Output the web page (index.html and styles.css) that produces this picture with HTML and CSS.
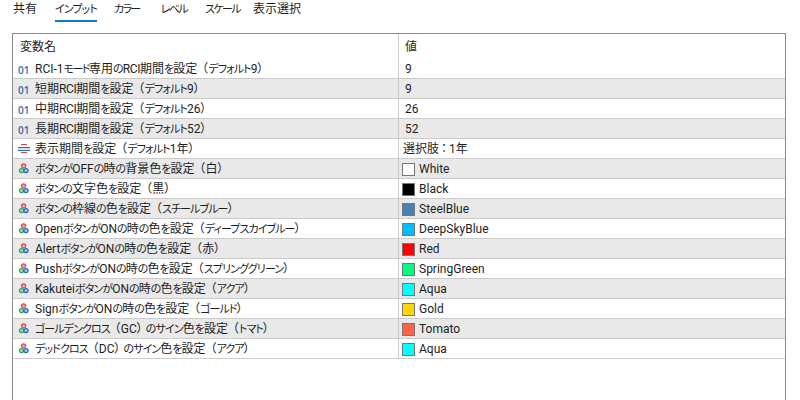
FILE: index.html
```html
<!DOCTYPE html>
<html lang="ja">
<head>
<meta charset="utf-8">
<title>Inputs</title>
<link rel="stylesheet" href="styles.css">
</head>
<body>
<svg class="defs" width="0" height="0">
  <symbol id="i-enum" viewBox="0 0 14 13">
    <path d="M1 5h12v2H1z" fill="#cfe2f5"/>
    <path d="M4 1.5h6" stroke="#d04848" fill="none"/>
    <path d="M1 4.5h12" stroke="#2a72b8" fill="none"/>
    <path d="M1 7.5h12" stroke="#2a72b8" fill="none"/>
    <path d="M4 9.5h6" stroke="#d04848" fill="none"/>
  </symbol>
  <symbol id="i-color" viewBox="0 0 14 13">
    <circle cx="6.6" cy="2.9" r="2.1" fill="#f0a8a8" stroke="#d84848" stroke-width="1.2"/>
    <circle cx="4.5" cy="7.6" r="2.1" fill="#a8d8b8" stroke="#2f9a58" stroke-width="1.2"/>
    <circle cx="9" cy="7.6" r="2.1" fill="#a0c4ec" stroke="#2468b8" stroke-width="1.2"/>
  </symbol>
</svg>
<nav class="tabs">
  <span class="tab t1">共有</span>
  <span class="tab t2 active"><span class="k">インプット</span></span>
  <span class="tab t3"><span class="k tight">カラー</span></span>
  <span class="tab t4"><span class="k tight">レベル</span></span>
  <span class="tab t5"><span class="k tight">スケール</span></span>
  <span class="tab t6">表示選択</span>
</nav>
<main class="grid">
  <div class="row head"><div class="c1 h1">変数名</div><div class="c2 h2">値</div></div>
  <div class="row"><div class="c1"><span class="num">01</span><div>RCI-1<span class="k m">モード</span>専用<span class="k">の</span><span class="l">RCI</span>期間<span class="k">を</span>設定<span class="p">（</span><span class="k">デフォルト</span>9<span class="q">）</span></div></div><div class="c2">9</div></div>
  <div class="row alt"><div class="c1"><span class="num">01</span><div>短期<span class="l">RCI</span>期間<span class="k">を</span>設定<span class="p">（</span><span class="k">デフォルト</span>9<span class="q">）</span></div></div><div class="c2">9</div></div>
  <div class="row"><div class="c1"><span class="num">01</span><div>中期<span class="l">RCI</span>期間<span class="k">を</span>設定<span class="p">（</span><span class="k">デフォルト</span>26<span class="q">）</span></div></div><div class="c2">26</div></div>
  <div class="row alt"><div class="c1"><span class="num">01</span><div>長期<span class="l">RCI</span>期間<span class="k">を</span>設定<span class="p">（</span><span class="k">デフォルト</span>52<span class="q">）</span></div></div><div class="c2">52</div></div>
  <div class="row"><div class="c1"><svg class="ic"><use href="#i-enum"/></svg><div>表示期間<span class="k">を</span>設定<span class="p">（</span><span class="k">デフォルト</span>1年<span class="q">）</span></div></div><div class="c2"><div class="sel">選択肢<span class="colon">：</span>1年</div></div></div>
  <div class="row alt"><div class="c1"><svg class="ic"><use href="#i-color"/></svg><div><span class="k">ボタンが</span>OFF<span class="k">の</span>時<span class="k">の</span>背景色<span class="k">を</span>設定<span class="p">（</span>白<span class="q">）</span></div></div><div class="c2"><i class="sw white"></i>White</div></div>
  <div class="row"><div class="c1"><svg class="ic"><use href="#i-color"/></svg><div><span class="k">ボタンの</span>文字色<span class="k">を</span>設定<span class="p">（</span>黒<span class="q">）</span></div></div><div class="c2"><i class="sw black"></i>Black</div></div>
  <div class="row alt"><div class="c1"><svg class="ic"><use href="#i-color"/></svg><div><span class="k">ボタンの</span>枠線<span class="k">の</span>色<span class="k">を</span>設定<span class="p">（</span><span class="k">スチールブルー</span><span class="q">）</span></div></div><div class="c2"><i class="sw steel"></i>SteelBlue</div></div>
  <div class="row"><div class="c1"><svg class="ic"><use href="#i-color"/></svg><div>Open<span class="k">ボタンが</span>ON<span class="k">の</span>時<span class="k">の</span>色<span class="k">を</span>設定<span class="p">（</span><span class="k">ディープスカイブルー</span><span class="q">）</span></div></div><div class="c2"><i class="sw sky"></i>DeepSkyBlue</div></div>
  <div class="row alt"><div class="c1"><svg class="ic"><use href="#i-color"/></svg><div>Alert<span class="k">ボタンが</span>ON<span class="k">の</span>時<span class="k">の</span>色<span class="k">を</span>設定<span class="p">（</span>赤<span class="q">）</span></div></div><div class="c2"><i class="sw red"></i>Red</div></div>
  <div class="row"><div class="c1"><svg class="ic"><use href="#i-color"/></svg><div>Push<span class="k">ボタンが</span>ON<span class="k">の</span>時<span class="k">の</span>色<span class="k">を</span>設定<span class="p">（</span><span class="k">スプリンググリーン</span><span class="q">）</span></div></div><div class="c2"><i class="sw spring"></i>SpringGreen</div></div>
  <div class="row alt"><div class="c1"><svg class="ic"><use href="#i-color"/></svg><div>Kakutei<span class="k">ボタンが</span>ON<span class="k">の</span>時<span class="k">の</span>色<span class="k">を</span>設定<span class="p">（</span><span class="k">アクア</span><span class="q">）</span></div></div><div class="c2"><i class="sw aqua"></i>Aqua</div></div>
  <div class="row"><div class="c1"><svg class="ic"><use href="#i-color"/></svg><div>Sign<span class="k">ボタンが</span>ON<span class="k">の</span>時<span class="k">の</span>色<span class="k">を</span>設定<span class="p">（</span><span class="k">ゴールド</span><span class="q">）</span></div></div><div class="c2"><i class="sw gold"></i>Gold</div></div>
  <div class="row alt"><div class="c1"><svg class="ic"><use href="#i-color"/></svg><div><span class="k">ゴールデンクロス</span><span class="p">（</span>GC<span class="q">）</span><span class="k">のサイン</span>色<span class="k">を</span>設定<span class="p">（</span><span class="k">トマト</span><span class="q">）</span></div></div><div class="c2"><i class="sw tomato"></i>Tomato</div></div>
  <div class="row"><div class="c1"><svg class="ic"><use href="#i-color"/></svg><div><span class="k">デッドクロス</span><span class="p">（</span>DC<span class="q">）</span><span class="k">のサイン</span>色<span class="k">を</span>設定<span class="p">（</span><span class="k">アクア</span><span class="q">）</span></div></div><div class="c2"><i class="sw aqua"></i>Aqua</div></div>
</main>
</body>
</html>
```
FILE: styles.css
```css
html, body { margin: 0; padding: 0; height: 400px; overflow: hidden; background: #fff; }
body { font-family: Roboto, "Noto Sans CJK JP", sans-serif; font-size: 12px; color: #1e1e1e; font-feature-settings: "palt"; }
.defs { position: absolute; }
.k { font-size: 11px; letter-spacing: -.9px; }
.m { letter-spacing: -1.5px; }
.l { letter-spacing: -.4px; }
.p { font-feature-settings: normal; margin-left: -1px; }
.q { margin-right: 3px; }
.tabs { display: flex; height: 33px; font-size: 12px; box-sizing: border-box; }
.tab { height: 22px; line-height: 18px; box-sizing: border-box; white-space: nowrap; }
.tight { letter-spacing: -1.6px; }
.t1 { margin-left: 13px; }
.t2 { margin-left: 18px; }
.t3 { margin-left: 17px; }
.t4 { margin-left: 21px; }
.t5 { margin-left: 18px; }
.t6 { margin-left: 13px; }
.active { border-bottom: 2px solid #0a78d0; }
.grid { height: 367px; margin: 0 14px 0 12px; border: 1px solid #8c8c8c; border-bottom: 0; box-sizing: border-box; }
.row { display: flex; height: 20px; border-bottom: 1px solid #cbcbcb; box-sizing: border-box; line-height: 17px; }
.head { height: 25px; border-bottom: 0; line-height: 23px; }
.alt { background: #e9e9e9; }
.c1 { width: 386px; display: flex; align-items: center; white-space: nowrap; overflow: hidden; border-right: 1px solid #cbcbcb; box-sizing: border-box; padding-top: 2px; }
.c2 { display: flex; align-items: center; padding: 2px 0 0 6px; }
.h1 { padding-left: 7px; }
.num { width: 14px; margin: 0 3px 0 5px; flex: none; font: 600 10px "Open Sans", sans-serif; color: #2f6ca8; }
.ic { width: 14px; height: 13px; margin: 0 4px 0 4px; flex: none; }
.sw { width: 13px; height: 13px; box-sizing: border-box; border: 1px solid #777; margin: 0 4px 0 -3px; display: block; }
.sel { margin-left: -2px; }
.colon { font-feature-settings: normal; margin: 0 -1px; }
.white { background: #fff; }
.black { background: #000; }
.steel { background: #4682b4; }
.sky { background: #00bfff; }
.red { background: #f00; }
.spring { background: #00ff7f; }
.aqua { background: #0ff; }
.gold { background: #ffd700; }
.tomato { background: #ff6347; }
```
